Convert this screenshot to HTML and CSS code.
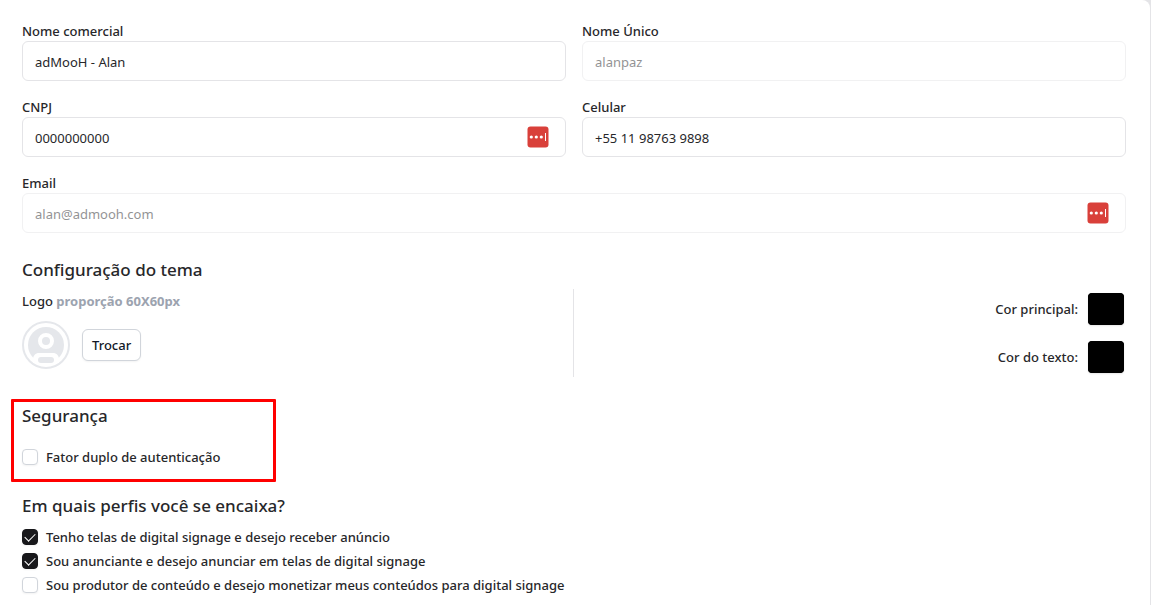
FILE: index.html
```html
<!DOCTYPE html>
<html lang="pt-BR">
<head>
    <meta charset="utf-8">
    <title>Perfil</title>
    <link rel="stylesheet" href="styles.css">
</head>
<body>
    <form class="panel">
        <div class="fields">
            <div class="field">
                <label for="trade-name">Nome comercial</label>
                <input class="text-box" type="text" id="trade-name" value="adMooH - Alan">
            </div>
            <div class="field">
                <label for="unique-name">Nome Único</label>
                <input class="text-box" type="text" id="unique-name" value="alanpaz" disabled>
            </div>
            <div class="field">
                <label for="cnpj">CNPJ</label>
                <div class="input-wrap">
                    <input class="text-box" type="text" id="cnpj" value="0000000000">
                    <svg class="pass-icon" viewBox="0 0 22 22">
                        <rect x="0.5" y="0.5" width="21" height="21" rx="3" fill="#d9403a"/>
                        <circle cx="4.3" cy="11" r="1.6" fill="#fff"/>
                        <circle cx="9.3" cy="11" r="1.6" fill="#fff"/>
                        <circle cx="14.3" cy="11" r="1.6" fill="#fff"/>
                        <rect x="18" y="7" width="1" height="8" fill="#fff"/>
                    </svg>
                </div>
            </div>
            <div class="field">
                <label for="phone">Celular</label>
                <input class="text-box" type="text" id="phone" value="+55 11 98763 9898">
            </div>
            <div class="field wide">
                <label for="email">Email</label>
                <div class="input-wrap">
                    <input class="text-box" type="text" id="email" value="alan@admooh.com" disabled>
                    <svg class="pass-icon" viewBox="0 0 22 22">
                        <rect x="0.5" y="0.5" width="21" height="21" rx="3" fill="#d9403a"/>
                        <circle cx="4.3" cy="11" r="1.6" fill="#fff"/>
                        <circle cx="9.3" cy="11" r="1.6" fill="#fff"/>
                        <circle cx="14.3" cy="11" r="1.6" fill="#fff"/>
                        <rect x="18" y="7" width="1" height="8" fill="#fff"/>
                    </svg>
                </div>
            </div>
        </div>

        <h2>Configuração do tema</h2>
        <div class="theme">
            <div class="logo">
                <div class="logo-title">Logo <b>proporção 60X60px</b></div>
                <div class="logo-row">
                    <svg class="avatar" viewBox="0 0 48 48">
                        <circle cx="24" cy="24" r="23" fill="#fff" stroke="#e5e7eb" stroke-width="2"/>
                        <circle cx="24" cy="24" r="18" fill="#e5e7eb"/>
                        <circle cx="24" cy="20" r="6" fill="none" stroke="#fff" stroke-width="4"/>
                        <path d="M11 42v-3.500c0-4 2.500-6.500 6-6.500h14c3.500 0 6 2.500 6 6.500V42z" fill="#fff"/>
                        <rect x="16" y="36" width="16" height="6" rx="3" fill="#e5e7eb"/>
                    </svg>
                    <button type="button" class="change">Trocar</button>
                </div>
            </div>
            <div class="colors">
                <label>Cor principal: <input type="color" value="#000000"></label>
                <label>Cor do texto: <input type="color" value="#000000"></label>
            </div>
        </div>

        <div class="security">
            <h2>Segurança</h2>
            <label class="check"><input type="checkbox"> Fator duplo de autenticação</label>
            <div class="highlight"></div>
        </div>

        <h2>Em quais perfis você se encaixa?</h2>
        <div class="profiles">
            <label class="check"><input type="checkbox" checked> Tenho telas de digital signage e desejo receber anúncio</label>
            <label class="check"><input type="checkbox" checked> Sou anunciante e desejo anunciar em telas de digital signage</label>
            <label class="check"><input type="checkbox"> Sou produtor de conteúdo e desejo monetizar meus conteúdos para digital signage</label>
        </div>
    </form>
</body>
</html>
```
FILE: styles.css
```css
* {
    box-sizing: border-box;
}

body {
    margin: 0;
    background: #e4e4e7;
    color: #27272a;
    font: 500 13px/20px "Noto Sans", "Open Sans", sans-serif;
}

.panel {
    margin-right: 1px;
    padding: 21px 24px 10px 22px;
    background: #fff;
    border-top-right-radius: 8px;
}

h2 {
    margin: 0;
    font-size: 17px;
    line-height: 28px;
    font-weight: 500;
}

.fields {
    display: grid;
    grid-template-columns: 1fr 1fr;
    gap: 16px;
    margin-bottom: 23px;
}

.field label {
    display: block;
}

.wide {
    grid-column: span 2;
}

.text-box {
    display: block;
    width: 100%;
    height: 40px;
    padding: 2px 12px 0;
    border: 1px solid #e4e4e7;
    border-radius: 6px;
    background: #fff;
    color: #27272a;
    font: 400 13px/20px "Noto Sans", "Open Sans", sans-serif;
}

.text-box:disabled {
    opacity: 0.5;
}

.input-wrap {
    position: relative;
}

.pass-icon {
    position: absolute;
    top: 9px;
    right: 17px;
    width: 22px;
    height: 22px;
}

.theme {
    display: grid;
    grid-template-columns: 1fr 1fr;
    margin-top: 5px;
    margin-bottom: 25px;
}

.logo {
    padding-top: 2px;
    border-right: 1px solid #e4e4e7;
}

.logo-title b {
    color: #9ca3af;
    font-weight: 700;
}

.logo-row {
    display: flex;
    align-items: center;
    gap: 12px;
    margin-top: 10px;
}

.avatar {
    width: 48px;
    height: 48px;
}

.change {
    height: 32px;
    padding: 0 9px;
    border: 1px solid #d1d5db;
    border-radius: 6px;
    background: #fff;
    box-shadow: 0 1px 2px rgba(0, 0, 0, 0.05);
    color: #111827;
    font: inherit;
}

.colors {
    display: flex;
    flex-direction: column;
    align-items: flex-end;
    gap: 16px;
    padding: 4px 2px;
}

.colors label {
    display: flex;
    align-items: center;
    gap: 10px;
}

.colors input {
    width: 36px;
    height: 32px;
    padding: 0;
    border: none;
    border-radius: 4px;
    background: #000;
    box-shadow: 0 1px 2px rgba(0, 0, 0, 0.1);
}

.colors input::-webkit-color-swatch-wrapper {
    padding: 0;
}

.colors input::-webkit-color-swatch {
    border: none;
    border-radius: 4px;
}

.security {
    position: relative;
    margin-bottom: 23px;
}

.security .check {
    margin-top: 15px;
}

.highlight {
    position: absolute;
    top: -3px;
    left: -11px;
    width: 265px;
    height: 83px;
    border: 3px solid #f00;
    border-radius: 1px;
    pointer-events: none;
}

.check {
    display: flex;
    align-items: center;
    gap: 8px;
    height: 24px;
}

.check input {
    appearance: none;
    width: 16px;
    height: 16px;
    margin: 0;
    border: 1px solid #d1d5db;
    border-radius: 4px;
    background: #fff;
    box-shadow: 0 1px 2px rgba(0, 0, 0, 0.05);
}

.check input:checked {
    border-color: #18181b;
    background: #18181b;
}

.check input:checked::before {
    content: "";
    display: block;
    width: 9px;
    height: 5px;
    margin: 3px 0 0 2px;
    border: solid #fff;
    border-width: 0 0 1px 1px;
    transform: rotate(-45deg);
}

.profiles {
    margin-top: 5px;
}
```
